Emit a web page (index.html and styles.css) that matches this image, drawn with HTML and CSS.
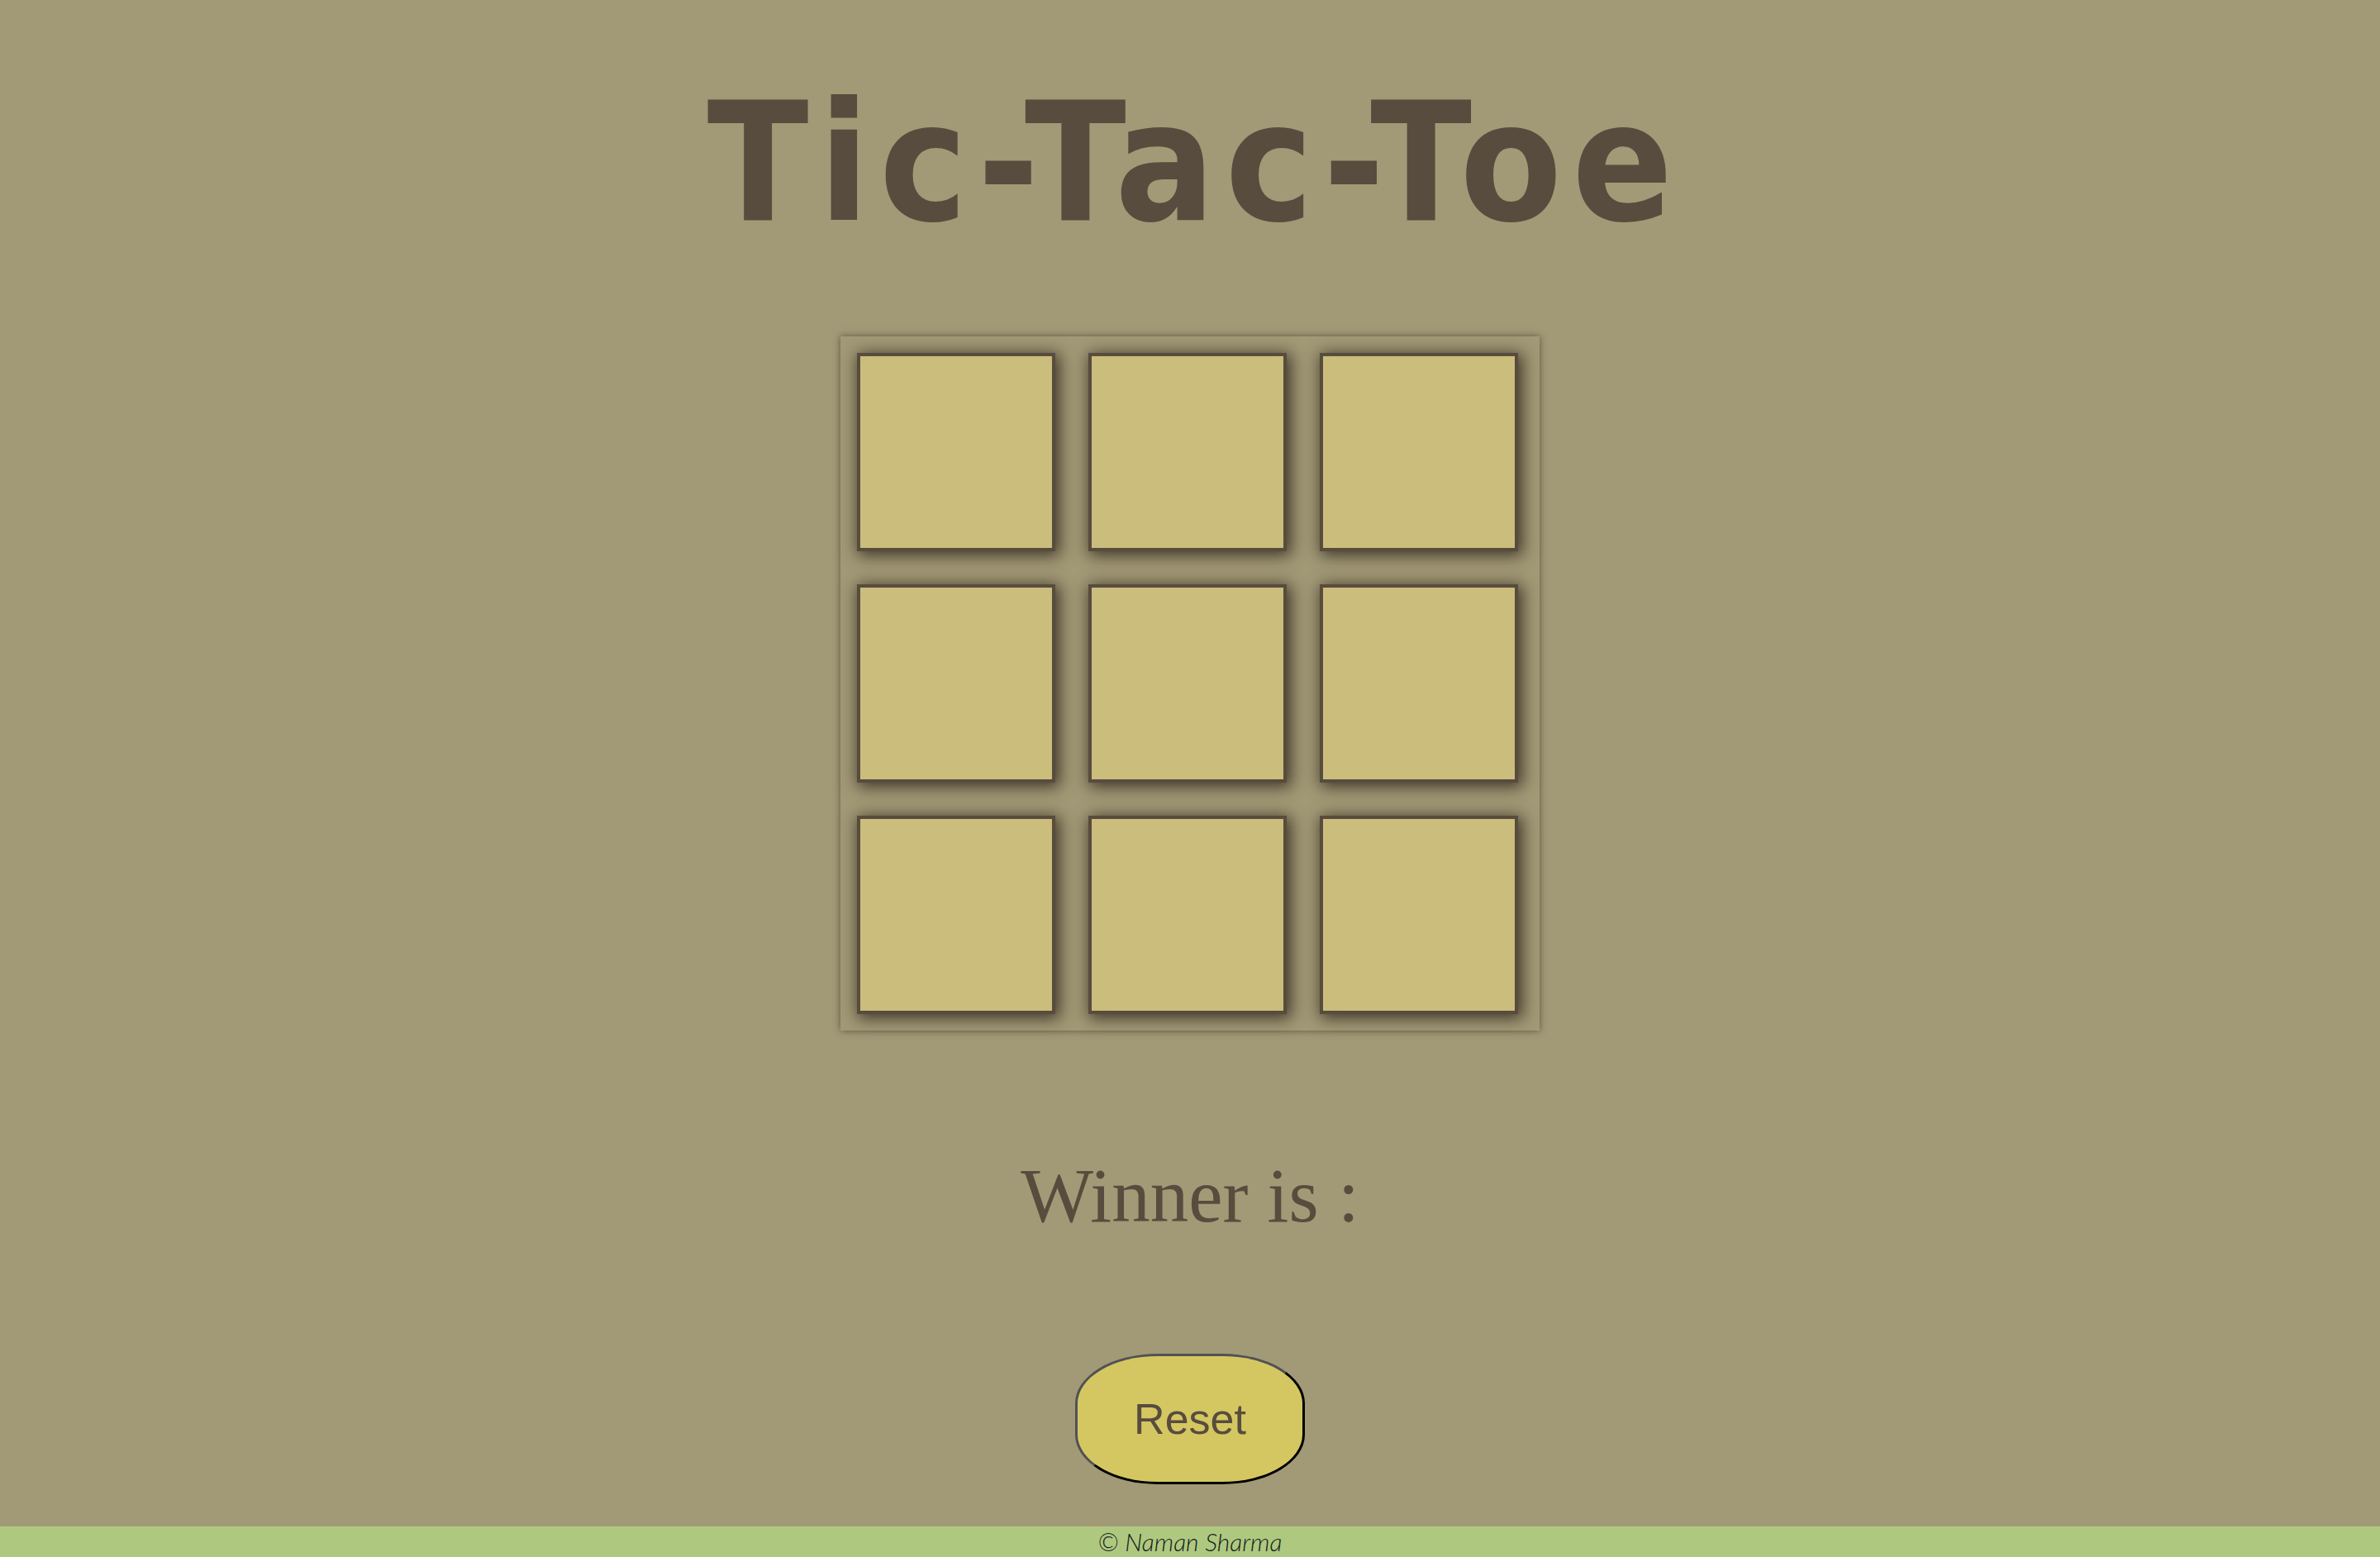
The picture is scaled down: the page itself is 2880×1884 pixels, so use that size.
FILE: index.html
```html
<!DOCTYPE html>
<html lang="en">
<head>
<meta charset="utf-8">
<title>Tic-Tac-Toe</title>
<link rel="stylesheet" href="styles.css">
</head>
<body>
  <h1 class="title">Tic-Tac-Toe</h1>
  <div class="board">
    <button class="cell"></button>
    <button class="cell"></button>
    <button class="cell"></button>
    <button class="cell"></button>
    <button class="cell"></button>
    <button class="cell"></button>
    <button class="cell"></button>
    <button class="cell"></button>
    <button class="cell"></button>
  </div>
  <p class="winner">Winner is :</p>
  <button class="reset">Reset</button>
  <footer class="footer">© Naman Sharma</footer>
</body>
</html>
```
FILE: styles.css
```css
html, body {
  margin: 0;
  padding: 0;
}

body {
  background: #a29976;
  min-height: 100vh;
  display: flex;
  flex-direction: column;
  align-items: center;
  color: #584c3e;
}

.title {
  margin: 97px 0 0;
  padding-left: 12px;
  font-family: "DejaVu Sans Condensed", "DejaVu Sans", Tahoma, sans-serif;
  font-stretch: condensed;
  font-weight: bold;
  font-size: 200px;
  line-height: 200px;
  letter-spacing: 12px;
  color: #584c3e;
}

.board {
  margin-top: 110px;
  width: 800px;
  height: 800px;
  padding: 20px 26px 20px 20px;
  display: grid;
  grid-template-columns: repeat(3, 240px);
  grid-template-rows: repeat(3, 240px);
  gap: 40px;
  box-shadow: 0 0 8px rgba(70, 60, 45, 0.75);
}

.cell {
  box-sizing: border-box;
  width: 240px;
  height: 240px;
  margin: 0;
  padding: 0;
  background: #cbbd7b;
  border: 4px solid #584c3e;
  box-shadow: 3px 3px 18px 2px rgba(58, 48, 36, 0.95);
}

.winner {
  margin: 153px 0 0;
  font-family: "Liberation Serif", "Times New Roman", serif;
  font-size: 93px;
  line-height: 93px;
  color: #584c3e;
}

.reset {
  box-sizing: border-box;
  margin-top: 145px;
  width: 278px;
  height: 158px;
  padding: 0;
  background: #d4c762;
  border-width: 3px;
  border-style: solid;
  border-color: #515154 #000 #000 #515154;
  border-radius: 100px / 60px;
  font-family: "Liberation Sans", Arial, sans-serif;
  font-size: 52px;
  color: #584c3e;
}

.footer {
  margin-top: auto;
  align-self: stretch;
  height: 37px;
  background: #aec97f;
  text-align: center;
  font-family: Lato, "Open Sans", sans-serif;
  font-style: italic;
  font-weight: 300;
  font-size: 30px;
  line-height: 37px;
  color: #17221f;
}
```
